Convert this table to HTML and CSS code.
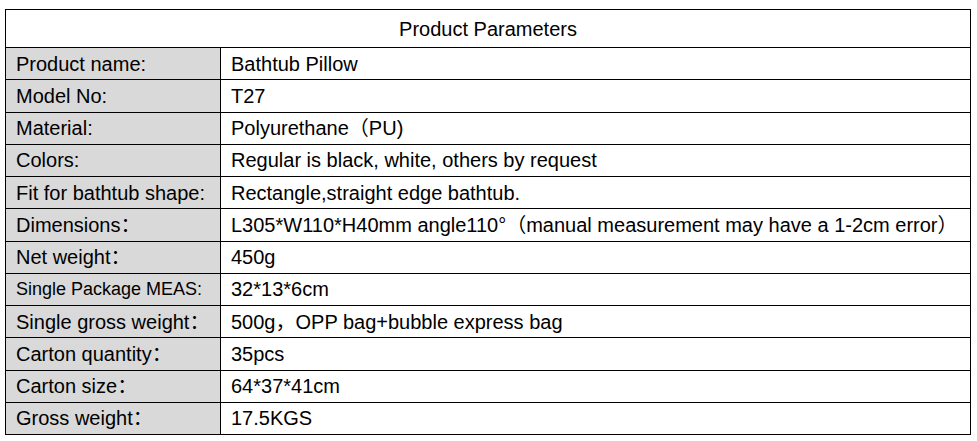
FILE: index.html
```html
<!DOCTYPE html>
<html>
<head>
<meta charset="utf-8">
<link rel="stylesheet" href="styles.css">
</head>
<body>
<table class="params">
  <colgroup><col class="c1"><col class="c2"></colgroup>
  <tr class="head"><td colspan="2">Product Parameters</td></tr>
  <tr><td class="k">Product name:</td><td class="v">Bathtub Pillow</td></tr>
  <tr><td class="k">Model No:</td><td class="v">T27</td></tr>
  <tr><td class="k">Material:</td><td class="v">Polyurethane（PU)</td></tr>
  <tr><td class="k">Colors:</td><td class="v">Regular is black, white, others by request</td></tr>
  <tr><td class="k">Fit for bathtub shape:</td><td class="v">Rectangle,straight edge bathtub.</td></tr>
  <tr><td class="k">Dimensions：</td><td class="v">L305*W110*H40mm angle110°（manual measurement may have a 1-2cm error）</td></tr>
  <tr><td class="k">Net weight：</td><td class="v">450g</td></tr>
  <tr><td class="k small">Single Package MEAS:</td><td class="v">32*13*6cm</td></tr>
  <tr><td class="k">Single gross weight：</td><td class="v">500g，OPP bag+bubble express bag</td></tr>
  <tr><td class="k">Carton quantity：</td><td class="v">35pcs</td></tr>
  <tr><td class="k">Carton size：</td><td class="v">64*37*41cm</td></tr>
  <tr><td class="k">Gross weight：</td><td class="v">17.5KGS</td></tr>
</table>
</body>
</html>
```
FILE: styles.css
```css
html, body {
  margin: 0;
  padding: 0;
  background: #ffffff;
}
body {
  padding: 9px 0 0 5px;
  font-family: "Liberation Sans", Arial, "Noto Sans CJK SC", sans-serif;
  color: #000;
}
.params {
  border-collapse: collapse;
  width: 966px;
  table-layout: fixed;
  font-size: 20px;
}
.params col.c1 {
  width: 215px;
}
.params td {
  border: 1px solid #000;
  padding: 0 0 0 10px;
  height: 31.25px;
  white-space: nowrap;
  overflow: hidden;
  line-height: 22px;
  vertical-align: middle;
}
.params tr.head td {
  height: 37px;
  text-align: center;
  padding: 0;
}
.params td.k {
  background: #d9d9d9;
}
.params td.small {
  font-size: 18px;
}
```
